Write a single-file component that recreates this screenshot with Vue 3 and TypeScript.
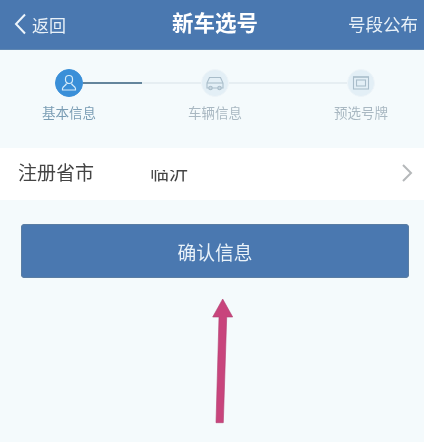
<script setup lang="ts">
interface Step { label: string; state: string; icon: string }
const steps: Step[] = [
  { label: '基本信息', state: 'done', icon: 'user' },
  { label: '车辆信息', state: 'todo', icon: 'car' },
  { label: '预选号牌', state: 'todo', icon: 'plate' },
]
</script>

<template>
  <div class="page">
    <header class="bar">
      <div class="back">
        <svg class="back-icon" width="14" height="24" viewBox="0 0 14 24"><path d="M12 2.5 L3 12 L12 21.5" fill="none" stroke="#eef5fb" stroke-width="2" /></svg>
        <span>返回</span>
      </div>
      <div class="title">新车选号</div>
      <div class="link">号段公布</div>
    </header>

    <div class="steps">
      <template v-for="(s, i) in steps" :key="s.label">
        <div v-if="i > 0" class="line" :class="{ half: i === 1 }"></div>
        <div class="step" :class="s.state">
          <div class="dot">
            <svg v-if="s.icon === 'user'" width="18" height="18" viewBox="0 0 18 18" fill="none" stroke="#d6ecfa" stroke-width="1.2"><rect x="5.5" y="1.5" width="7" height="8" rx="3.4" /><path d="M6.5 9.5 C6 11.5 3 12 2.5 14.5 V16 H15.5 V14.5 C15 12 12 11.5 11.5 9.5" /></svg>
            <svg v-else-if="s.icon === 'car'" width="20" height="16" viewBox="0 0 20 16" fill="none" stroke="#a9bdca" stroke-width="1.1"><path d="M2 8 L4.5 2.5 H15.5 L18 8 V13 H2 Z" /><path d="M2 8 H18" /><circle cx="5.5" cy="13" r="1.7" /><circle cx="14.5" cy="13" r="1.7" /></svg>
            <svg v-else width="18" height="16" viewBox="0 0 18 16" fill="none" stroke="#a9bdca" stroke-width="1.1"><rect x="1.5" y="2" width="15" height="12" /><rect x="4.5" y="5" width="9" height="6" /><path d="M1 2 H17" /></svg>
          </div>
          <div class="label">{{ s.label }}</div>
        </div>
      </template>
    </div>

    <div class="row">
      <span class="row-label">注册省市</span>
      <span class="row-value">临沂<i class="smudge"></i></span>
      <svg class="chev" width="12" height="20" viewBox="0 0 12 20"><path d="M2 2 L10 10 L2 18" fill="none" stroke="#b5b8ba" stroke-width="2" /></svg>
    </div>

    <button class="confirm">确认信息</button>

    <svg class="arrow" width="424" height="442" viewBox="0 0 424 442">
      <polygon points="222.7,299 232.7,317 226.7,317 223.3,422.7 216,422.7 219,317 212.7,317" fill="#c8447c" stroke="#b03f70" stroke-width="0.6" />
    </svg>
  </div>
</template>

<style scoped>
.page {
  position: relative;
  width: 424px;
  height: 442px;
  overflow: hidden;
  background: #f4fafc;
  font-family: "Noto Sans CJK SC", "Liberation Sans", sans-serif;
}
.bar {
  height: 49px;
  display: grid;
  grid-template-columns: 159px 176px 70px;
  align-items: center;
  padding-left: 13px;
  background: #4a78b0;
  color: #e9f1f8;
  border-bottom: 1px solid #5f87b2;
  filter: blur(0.4px);
}
.back {
  display: flex;
  align-items: center;
  gap: 5px;
  font-size: 17px;
}
.back-icon { flex: none; margin-bottom: 2px; }
.title {
  font-size: 21.5px;
  font-weight: 700;
  color: #fff;
  line-height: 30px;
  padding-bottom: 5px;
}
.link {
  font-size: 17.5px;
  white-space: nowrap;
  padding-bottom: 2px;
}
.steps {
  display: flex;
  align-items: flex-start;
  height: 98px;
  padding: 19px 0 0 55px;
  box-sizing: border-box;
  filter: blur(0.5px);
}
.step {
  width: 28px;
  flex: none;
}
.dot {
  width: 28px;
  height: 28px;
  border-radius: 50%;
  display: flex;
  align-items: center;
  justify-content: center;
  box-sizing: border-box;
  background: #e3eff6;
  border: 1.5px solid #edf4f8;
}
.done .dot {
  background: #3a8fd8;
  border-color: #3a8fd8;
}
.label {
  margin: 5px -20px 0;
  font-size: 13.5px;
  line-height: 20px;
  text-align: center;
  color: #a9b8c2;
  white-space: nowrap;
}
.done .label { color: #7a9db4; }
.line {
  width: 118px;
  height: 2px;
  margin-top: 13px;
  background: #e6eef2;
  flex: none;
}
.line.half {
  background: linear-gradient(to right, #64859c 50%, #e6eef2 50%);
}
.row {
  height: 52px;
  display: flex;
  align-items: center;
  background: #fff;
  padding: 0 11px 0 18px;
  filter: blur(0.3px);
}
.row-label {
  width: 132px;
  font-size: 19px;
  color: #444;
  padding-bottom: 5px;
}
.row-value {
  position: relative;
  font-size: 19px;
  color: #444;
  white-space: nowrap;
  width: 38px;
  padding-bottom: 5px;
}
.smudge {
  position: absolute;
  left: 0;
  right: 0;
  top: 3px;
  height: 9px;
  background: #fff;
}
.chev { margin-left: auto; margin-bottom: 2px; }
.confirm {
  display: block;
  width: 388px;
  height: 54px;
  margin: 24px 0 0 21px;
  border: none;
  border-radius: 4px;
  background: #4a78b0;
  box-shadow: inset 0 0 0 1px #5a7da3;
  color: #e9f2f9;
  font-family: inherit;
  font-size: 18.75px;
  filter: blur(0.3px);
}
.arrow {
  position: absolute;
  left: 0;
  top: 0;
  pointer-events: none;
  filter: blur(0.4px);
}
</style>
